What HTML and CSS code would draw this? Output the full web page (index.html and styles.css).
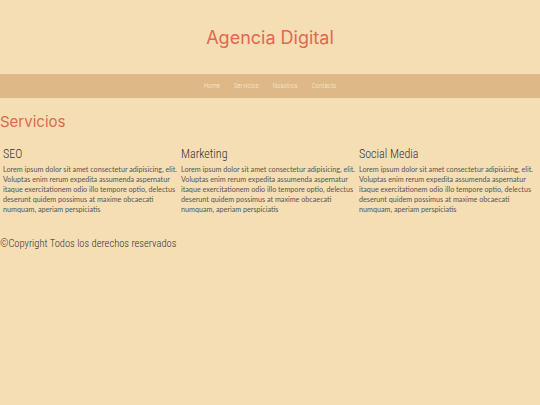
FILE: index.html
```html
<!DOCTYPE html>
<html lang="es">
<head>
<meta charset="utf-8">
<title>Agencia Digital</title>
<link rel="stylesheet" href="styles.css">
</head>
<body>
<header class="header">
  <h1 class="logo">Agencia Digital</h1>
</header>
<nav class="nav">
  <a href="#">Home</a>
  <a href="#">Servicios</a>
  <a href="#">Nosotros</a>
  <a href="#">Contacto</a>
</nav>
<main class="main">
  <h2 class="section-title">Servicios</h2>
  <div class="services">
    <div class="service">
      <h3>SEO</h3>
      <p>Lorem ipsum dolor sit amet consectetur adipisicing, elit. Voluptas enim rerum expedita assumenda aspernatur itaque exercitationem odio illo tempore optio, delectus deserunt quidem possimus at maxime obcaecati numquam, aperiam perspiciatis</p>
    </div>
    <div class="service">
      <h3>Marketing</h3>
      <p>Lorem ipsum dolor sit amet consectetur adipisicing, elit. Voluptas enim rerum expedita assumenda aspernatur itaque exercitationem odio illo tempore optio, delectus deserunt quidem possimus at maxime obcaecati numquam, aperiam perspiciatis</p>
    </div>
    <div class="service">
      <h3>Social Media</h3>
      <p>Lorem ipsum dolor sit amet consectetur adipisicing, elit. Voluptas enim rerum expedita assumenda aspernatur itaque exercitationem odio illo tempore optio, delectus deserunt quidem possimus at maxime obcaecati numquam, aperiam perspiciatis</p>
    </div>
  </div>
</main>
<footer class="footer">
  <p>&copy;Copyright Todos los derechos reservados</p>
</footer>
</body>
</html>
```
FILE: styles.css
```css
html, body {
  margin: 0;
  padding: 0;
}
body {
  background: #f5deb3;
  font-family: Roboto, "Liberation Sans", sans-serif;
  color: #3a3a3a;
}
.header {
  height: 74px;
  display: flex;
  align-items: center;
  justify-content: center;
}
.logo {
  margin: 0;
  font-family: Inter, "Open Sans", sans-serif;
  font-weight: 400;
  font-size: 18px;
  color: #e0684f;
}
.nav {
  height: 24px;
  background: #deb887;
  display: flex;
  justify-content: center;
  align-items: center;
  gap: 14px;
}
.nav a {
  color: #f8ecd6;
  text-decoration: none;
  font-size: 7px;
  font-family: "Roboto Condensed", "Liberation Sans Narrow", sans-serif;
  font-weight: 300;
}
.main {
  padding-top: 14px;
}
.section-title {
  margin: 0;
  font-family: Inter, "Open Sans", sans-serif;
  font-weight: 400;
  font-size: 15px;
  line-height: 20px;
  color: #e0684f;
}
.services {
  display: grid;
  grid-template-columns: repeat(3, 178px);
  padding-left: 3px;
  margin-top: 15px;
}
.service h3 {
  margin: 0;
  font-family: "Roboto Condensed", "Liberation Sans Narrow", sans-serif;
  font-weight: 300;
  font-size: 12px;
  line-height: 14px;
  color: #333;
}
.service p {
  margin: 4px 0 0;
  font-family: Lato, sans-serif;
  font-size: 7.2px;
  line-height: 10px;
  color: #575757;
}
.footer p {
  margin: 23px 0 0;
  font-family: "Roboto Condensed", "Liberation Sans Narrow", sans-serif;
  font-weight: 300;
  font-size: 10.5px;
  line-height: 12px;
  color: #333;
}
```
